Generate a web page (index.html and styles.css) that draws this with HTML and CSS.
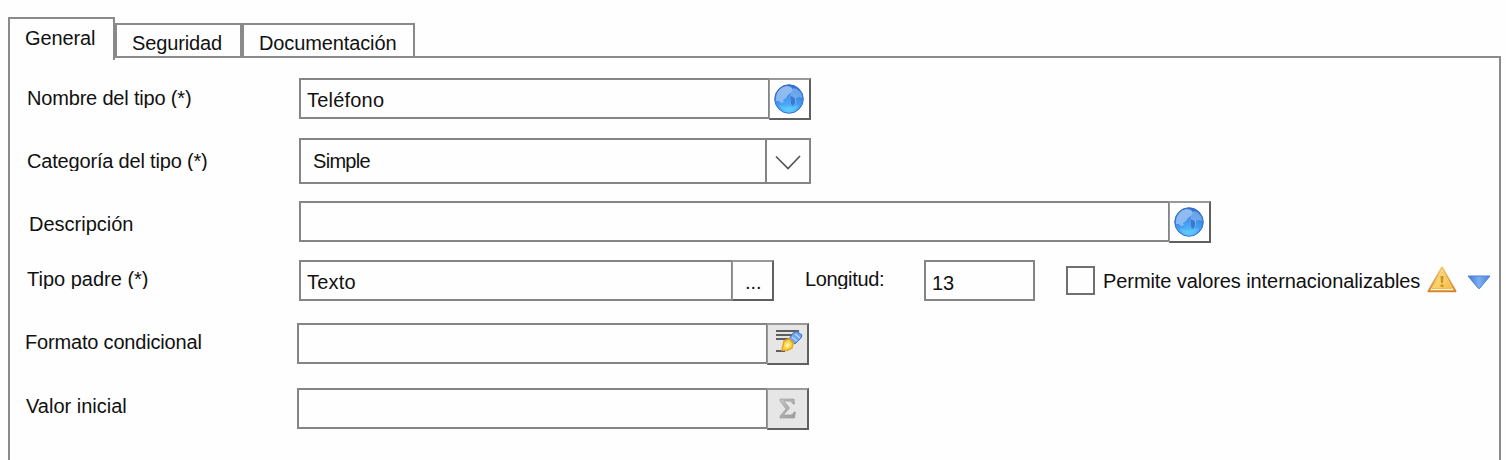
FILE: index.html
```html
<!DOCTYPE html>
<html lang="es">
<head>
<meta charset="utf-8">
<title>Tipo</title>
<link rel="stylesheet" href="styles.css">
</head>
<body>
<svg class="defs" width="0" height="0">
  <defs>
    <radialGradient id="sea" cx="50%" cy="95%" r="95%">
      <stop offset="0" stop-color="#58c8ff"/><stop offset=".45" stop-color="#459cf0"/><stop offset="1" stop-color="#2f6ed2"/>
    </radialGradient>
    <linearGradient id="gloss" x1="0" y1="0" x2="0" y2="1">
      <stop offset="0" stop-color="#a9c8f0"/><stop offset="1" stop-color="#8fc0f6"/>
    </linearGradient>
    <linearGradient id="arrow" x1="0" y1="0" x2="1" y2="0">
      <stop offset="0" stop-color="#3a78dc"/><stop offset=".5" stop-color="#7eaef0"/><stop offset="1" stop-color="#4a84e0"/>
    </linearGradient>
    <linearGradient id="warn" x1="0" y1="0" x2="0" y2="1">
      <stop offset="0" stop-color="#f4c860"/><stop offset="1" stop-color="#d8842c"/>
    </linearGradient>
    <linearGradient id="amber" x1="0" y1="0" x2="1" y2="1">
      <stop offset="0" stop-color="#ffe9a0"/><stop offset="1" stop-color="#f5bc3c"/>
    </linearGradient>
    <linearGradient id="sigma" x1="0" y1="0" x2="1" y2="1">
      <stop offset="0" stop-color="#c4c4c4"/><stop offset="1" stop-color="#999"/>
    </linearGradient>
    <symbol id="globe" viewBox="0 0 30 30">
      <circle cx="15" cy="15" r="14.3" fill="url(#sea)" stroke="#3a72cc"/>
      <path d="M2 15C2 8 7 2.500 13 2L17 3L19 6L17 9L14 11L12 14L9 16L10 18L7 19L5 17L2 17Z" fill="url(#gloss)" opacity=".85"/>
      <path d="M19 4L23 5L27 9L28.500 14L25 13L22 14L22 18L20 22L17 20L17 16L15 13L17 10Z" fill="#8dbcf2" opacity=".6"/>
      <path d="M16 12L19 13L21 15L21 19L19 22L17 20L17 16Z" fill="#2a66c6" opacity=".75"/>
      <path d="M5 21Q15 25 25 21Q21 28 15 28Q9 28 5 21Z" fill="#62ccff" opacity=".6"/>
    </symbol>
  </defs>
</svg>
<main class="dialog">
  <nav class="tabs">
    <div class="tab tab-active">General</div>
    <div class="tab">Seguridad</div>
    <div class="tab tab-last">Documentación</div>
  </nav>
  <section class="panel">
    <div class="row">
      <span class="label label-tight condensed drop-8">Nombre del tipo (*)</span>
      <div class="field wide-470">Teléfono</div>
      <div class="button"><svg width="30" height="30"><use href="#globe"/></svg></div>
    </div>
    <div class="row">
      <span class="label label-tight condensed drop-11">Categoría del tipo (*)</span>
      <div class="field select"><span>Simple</span>
        <span class="chevron"><svg width="26" height="16" viewBox="0 0 26 16"><path d="M1 1.500L13 13.500L25 1" fill="none" stroke="#555" stroke-width="1.700"/></svg></span>
      </div>
    </div>
    <div class="row">
      <span class="label drop-11 in-2">Descripción</span>
      <div class="field wide-870"></div>
      <div class="button"><svg width="30" height="30"><use href="#globe"/></svg></div>
    </div>
    <div class="row">
      <span class="label label-tight drop-7">Tipo padre (*)</span>
      <div class="field wide-433">Texto</div>
      <div class="button button-dots">...</div>
      <span class="length label-tight drop-7">Longitud:</span>
      <div class="field wide-110">13</div>
      <span class="checkbox"></span>
      <span class="check-text">Permite valores internacionalizables</span>
      <svg class="warning" width="30" height="27" viewBox="0 0 30 27">
        <path d="M15 1.500L28.500 25.300H1.500Z" fill="#fff5d8" stroke="url(#warn)" stroke-width="2" stroke-linejoin="round"/>
        <path d="M15 5.500L25 22.500H5Z" fill="url(#amber)" stroke="#f0c04c"/>
        <path d="M13.400 10H16.600L16 17H14ZM13.600 18.500H16.400V21H13.600Z" fill="#c89424"/>
      </svg>
      <svg class="more" width="24" height="15" viewBox="0 0 24 15"><path d="M1 1H23L12.500 13.500H11.500Z" fill="url(#arrow)" stroke="#4a80d8"/></svg>
    </div>
    <div class="row row-out">
      <span class="label condensed drop-7">Formato condicional</span>
      <div class="field wide-470"></div>
      <div class="button button-gray">
        <svg width="28" height="26" viewBox="0 0 28 26">
          <path d="M1 2H24M1 6H20M1 10H15M1 22H10" stroke="#333" stroke-width="1.700"/>
          <path d="M18 4L22 2.500L27 6L26 9L20 15L14 10Z" fill="#6fa5ea" stroke="#3c77cd"/>
          <path d="M17 8L22 12M20 5L25 9" stroke="#b9d6fb" stroke-width="1.500"/>
          <path d="M9 12L14 10L18 14L17 19L12 21.500L7 21Z" fill="#ffd850" stroke="#eda61c" stroke-width="1.600"/>
          <path d="M10 17L13 13L15 16L12 19Z" fill="#fff0a5"/>
        </svg>
      </div>
    </div>
    <div class="row row-out">
      <span class="label in-1 drop-6">Valor inicial</span>
      <div class="field wide-470"></div>
      <div class="button button-gray button-sigma">
        <svg width="17" height="21" viewBox="0 0 17 21"><path d="M1 1H15L15.500 6H14Q13 3 10 3H5L10.500 10L4.500 17H11Q14 17 15 14H16.500L15.500 20H1V18L7 11L1 3Z" fill="url(#sigma)" stroke="#999" stroke-width=".6"/></svg>
      </div>
    </div>
  </section>
</main>
</body>
</html>
```
FILE: styles.css
```css
* { box-sizing: border-box; }
body {
  margin: 0;
  height: 460px;
  overflow: hidden;
  background: #fefefe;
  color: #111;
  font: 20px/24px "Liberation Sans", Arial, sans-serif;
  white-space: nowrap;
}
.defs { display: block; }
.dialog { padding: 17px 5px 0 8px; }
.tabs { display: flex; align-items: flex-end; height: 41px; }
.tab {
  height: 35px;
  width: 127px;
  padding: 6px 0 0 15px;
  border: 2px solid #8a8a8a;
  letter-spacing: -.12px;
}
.tab-active {
  position: relative;
  height: 43px;
  width: 107px;
  margin-bottom: -2px;
  padding: 7px 0 0 15px;
  border-bottom: 0;
  background: #fefefe;
}
.tab-last { width: 173px; }
.panel {
  display: grid;
  grid-template-rows: 60px 63px 59px 63px 65px 60px;
  width: 1493px;
  height: 420px;
  margin-top: -2px;
  padding: 20px 0 0 17px;
  border: 2px solid #8a8a8a;
}
.row { display: flex; align-items: flex-start; }
.label { width: 272px; }
.row-out .label { margin-left: -2px; }
.label-tight { height: 22px; overflow: hidden; }
.condensed { letter-spacing: -.18px; }
.in-1 { padding-left: 1px; }
.in-2 { padding-left: 2px; }
.drop-6 { margin-top: 6px; }
.drop-7 { margin-top: 7px; }
.drop-8 { margin-top: 8px; }
.drop-11 { margin-top: 11px; }
.field {
  height: 41px;
  padding: 8px 0 0 6px;
  border: 2px solid #858585;
  letter-spacing: .2px;
}
.wide-470 { width: 471px; }
.wide-870 { width: 871px; }
.wide-433 { width: 434px; }
.wide-110 { width: 111px; padding-top: 9px; letter-spacing: 0; }
.select {
  display: flex;
  justify-content: space-between;
  width: 512px;
  height: 46px;
  padding: 9px 0 0 12px;
  letter-spacing: -.7px;
}
.chevron {
  display: flex;
  width: 44px;
  height: 42px;
  margin-top: -9px;
  padding: 15px 0 0 8px;
  border-left: 2px solid #858585;
}
.button {
  width: 42px;
  height: 42px;
  margin-left: -1px;
  padding: 4px 0 0 4px;
  border: 1px solid #999;
  border-width: 2px 2px 2px 1px;
  border-color: #999 #606060 #606060 #999;
}
.button svg { display: block; }
.button-dots { height: 41px; padding: 8px 0 0 12px; }
.button-gray { background: #e6e6e6; padding: 4px 0 0 7px; }
.button-sigma { padding: 8px 0 0 11px; }
.length { width: 119px; margin-left: 31px; letter-spacing: -.35px; }
.checkbox {
  width: 29px;
  height: 29px;
  margin: 6px 0 0 31px;
  border: 2px solid #707070;
}
.check-text { width: 324px; margin: 9px 0 0 8px; letter-spacing: -.08px; }
.warning { margin-top: 6px; }
.more { margin: 15px 0 0 10px; }
```
